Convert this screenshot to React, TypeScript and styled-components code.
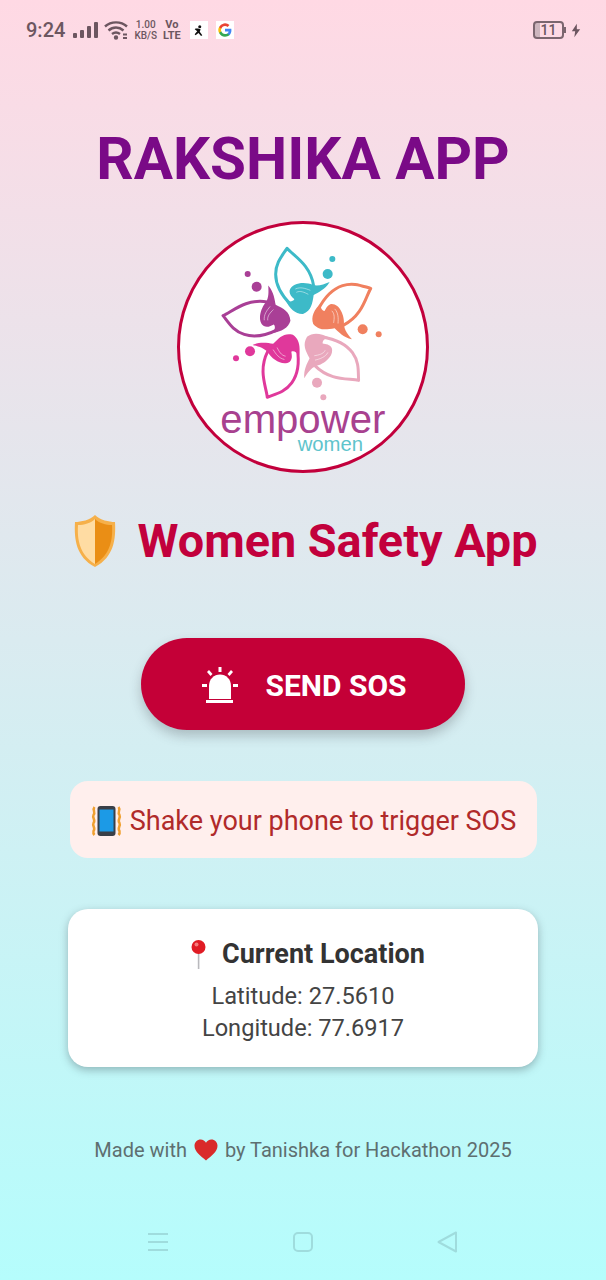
import styled, { createGlobalStyle } from 'styled-components';

const GlobalStyle = createGlobalStyle`
  html, body {
    margin: 0;
    padding: 0;
  }
  body {
    font-family: Roboto, "Liberation Sans", sans-serif;
  }
`;

const Page = styled.div`
  width: 606px;
  height: 1280px;
  overflow: hidden;
  display: flex;
  flex-direction: column;
  align-items: center;
  background: linear-gradient(180deg, #ffd9e4 0%, #b5fdfc 100%);
`;

const StatusBar = styled.div`
  width: 100%;
  height: 60px;
  box-sizing: border-box;
  padding: 0 25px 0 26px;
  display: flex;
  align-items: center;
  gap: 6px;
  color: #6c5660;
`;

const Clock = styled.span`
  font-size: 20px;
  font-weight: 500;
  margin-right: 2px;
`;

const SpeedBlock = styled.div`
  display: flex;
  flex-direction: column;
  align-items: center;
  font-size: 10px;
  font-weight: 500;
  line-height: 11px;
`;

const NetBlock = styled(SpeedBlock)`
  font-size: 11px;
  font-weight: 700;
`;

const NotifyTile = styled.div<{ $gap: number }>`
  width: 18px;
  height: 18px;
  margin-left: ${(p) => p.$gap}px;
  background: #fff;
  display: flex;
  align-items: center;
  justify-content: center;
`;

const StatusRight = styled.div`
  margin-left: auto;
  display: flex;
  align-items: center;
  gap: 7px;
`;

const Battery = styled.div`
  position: relative;
  width: 31px;
  height: 18px;
  box-sizing: border-box;
  border: 2px solid #7b666f;
  border-radius: 4px;
  display: flex;
  align-items: center;
  justify-content: center;
  font-size: 14px;
  font-weight: 500;
  color: #6c5660;
  background: linear-gradient(90deg, #cdb6be 0 5px, transparent 5px);

  &::after {
    content: '';
    position: absolute;
    right: -4px;
    top: 4px;
    width: 2px;
    height: 6px;
    background: #7b666f;
  }
`;

const Title = styled.h1`
  margin: 63px 0 0;
  font-size: 58.4px;
  line-height: 72px;
  font-weight: 700;
  color: #7a0a87;
  white-space: nowrap;
`;

const LogoBadge = styled.div`
  width: 252px;
  height: 252px;
  box-sizing: border-box;
  margin-top: 26px;
  border: 3px solid #c2003c;
  border-radius: 50%;
  background: #fff;
  overflow: hidden;
`;

const Heading = styled.h2`
  margin: 35px 0 0;
  height: 66px;
  display: flex;
  align-items: center;
  gap: 19px;
  font-size: 46.8px;
  font-weight: 700;
  color: #c2003c;
  white-space: nowrap;
`;

const SosButton = styled.button`
  width: 324px;
  height: 92px;
  margin-top: 64px;
  padding: 3px 0 0 3px;
  border: 0;
  border-radius: 46px;
  background: #c40037;
  color: #fff;
  display: flex;
  align-items: center;
  justify-content: center;
  gap: 27px;
  font-family: inherit;
  font-size: 30px;
  font-weight: 700;
  box-shadow: 0 6px 12px rgba(60, 60, 70, 0.28);
`;

const ShakeBanner = styled.div`
  width: 467px;
  height: 77px;
  margin-top: 51px;
  padding: 2px 0 0 1px;
  box-sizing: border-box;
  border-radius: 18px;
  background: #ffefed;
  color: #b02a2a;
  display: flex;
  align-items: center;
  justify-content: center;
  gap: 8px;
  font-size: 27px;
  white-space: nowrap;
`;

const LocationCard = styled.div`
  width: 470px;
  height: 158px;
  margin-top: 51px;
  box-sizing: border-box;
  padding-top: 29px;
  border-radius: 20px;
  background: #fff;
  box-shadow: 0 3px 8px rgba(50, 60, 70, 0.35);
  display: flex;
  flex-direction: column;
  align-items: center;
  color: #444;
  font-size: 23.6px;
  line-height: 32px;
`;

const CardTitle = styled.div`
  display: flex;
  align-items: center;
  gap: 11px;
  margin-bottom: 10px;
  font-size: 27px;
  font-weight: 700;
  color: #333;
`;

const Footer = styled.div`
  margin-top: 69px;
  display: flex;
  align-items: center;
  gap: 7px;
  font-size: 20px;
  line-height: 28px;
  color: #5e6f70;
`;

const NavBar = styled.div`
  width: 100%;
  margin-top: 67px;
  box-sizing: border-box;
  padding: 0 149px 0 148px;
  display: flex;
  align-items: center;
  justify-content: space-between;
`;

const PetalFigure = ({ color, angle }: { color: string; angle: number }) => (
  <g transform={`rotate(${angle} 393 335)`}>
    <path
      d="M362 272C340 250 316 215 316 180C316 145 335 125 350 102C370 125 420 150 430 215"
      fill="none"
      stroke={color}
      strokeWidth="9"
      strokeLinejoin="round"
    />
    <path
      d="M358 228C366 204 405 202 428 212C445 216 460 210 478 203C464 226 444 234 430 242C426 268 424 288 398 299C376 300 358 284 346 258C358 264 368 262 372 255C365 248 356 240 358 228Z"
      fill={color}
    />
    <path d="M375 224C390 217 405 222 420 228M378 234C390 228 402 234 414 240" fill="none" stroke="#fff" strokeWidth="2" opacity="0.7" />
  </g>
);

const logoDots = [
  [486, 134, 9, '#3dbac8'],
  [472, 179, 15, '#3dbac8'],
  [577, 345, 15, '#f0805f'],
  [625, 360, 9, '#f0805f'],
  [440, 505, 15, '#e9a8bd'],
  [459, 549, 9, '#e9a8bd'],
  [239, 411, 15, '#e0389b'],
  [197, 432, 9, '#e0389b'],
  [259, 217, 15, '#a93f96'],
  [232, 179, 9, '#a93f96'],
] as const;

const EmpowerLogo = () => (
  <svg width="246" height="246" viewBox="29 29 738 738">
    <PetalFigure color="#3dbac8" angle={0} />
    <PetalFigure color="#f0805f" angle={72} />
    <PetalFigure color="#e9a8bd" angle={144} />
    <PetalFigure color="#e0389b" angle={216} />
    <PetalFigure color="#a93f96" angle={288} />
    {logoDots.map(([cx, cy, r, fill]) => (
      <circle key={`${cx}-${cy}`} cx={cx} cy={cy} r={r} fill={fill} />
    ))}
    <text x="150" y="656" fontFamily="'Liberation Sans', sans-serif" fontSize="120" fill="#a8418f" textLength="495" lengthAdjust="spacingAndGlyphs">
      empower
    </text>
    <text x="382" y="710" fontFamily="'Liberation Sans', sans-serif" fontSize="58" fill="#5fc4cc" textLength="196" lengthAdjust="spacingAndGlyphs">
      women
    </text>
  </svg>
);

const ShieldIcon = () => (
  <svg width="50" height="52" viewBox="-6 0 50 52">
    <path d="M21 0C16 5 7 7 1 7C0 24 2 42 21 52C40 42 42 24 41 7C35 7 26 5 21 0Z" fill="#f6b04a" />
    <path d="M21 4C17 8 10 10 4 10C3 25 6 40 21 49Z" fill="#ffdca3" />
    <path d="M21 4C25 8 32 10 38 10C39 25 36 40 21 49Z" fill="#ea8e15" />
  </svg>
);

const SirenIcon = () => (
  <svg width="36" height="37" viewBox="0 0 36 37" fill="#fff">
    <path d="M7 32V19C7 12 12 7.500 18 7.500C24 7.500 29 12 29 19V32Z" />
    <rect x="4" y="33" width="27" height="3" />
    <rect x="16.500" y="0" width="3" height="5" />
    <rect x="0" y="17" width="5" height="3" />
    <rect x="31" y="17" width="5" height="3" />
    <path d="M5 5L7 3L10.500 7L8.500 9ZM31 5L29 3L25.500 7L27.500 9Z" />
  </svg>
);

const VibrateIcon = () => (
  <svg width="31" height="30" viewBox="0 0 31 30">
    <path d="M3.500 1C1 4 5 6 2.500 9C1 12 5 14 2.500 17C1 20 5 22 2.500 25C2 27 2.500 28 3.500 29M27.500 1C30 4 26 6 28.500 9C30 12 26 14 28.500 17C30 20 26 22 28.500 25C29 27 28.500 28 27.500 29" fill="none" stroke="#f0a030" strokeWidth="2.500" />
    <rect x="6.500" y="0" width="18" height="30" rx="3" fill="#3a3f47" />
    <rect x="8.500" y="3.500" width="14" height="22" fill="#1c9ae6" />
  </svg>
);

const PinIcon = () => (
  <svg width="30" height="30" viewBox="-10 0 30 30">
    <rect x="6.800" y="12" width="1.600" height="18" fill="#b9b9bd" />
    <circle cx="7.500" cy="8" r="7" fill="#e01b24" />
    <circle cx="5.500" cy="5.500" r="2" fill="#f47a7a" />
  </svg>
);

const HeartIcon = () => (
  <svg width="24" height="22" viewBox="0 0 24 22">
    <path d="M12 21.500C7 17 0.500 13 0.500 6.800C0.500 3 3.400 0.500 6.600 0.500C9 0.500 11 1.800 12 3.800C13 1.800 15 0.500 17.400 0.500C20.600 0.500 23.500 3 23.500 6.800C23.500 13 17 17 12 21.500Z" fill="#d92a2a" />
  </svg>
);

const App = () => (
  <Page>
    <GlobalStyle />
    <StatusBar>
      <Clock>9:24</Clock>
      <svg width="25" height="18" viewBox="0 0 25 18" fill="#6c5660">
        <rect x="0" y="12" width="4" height="5" rx="1" />
        <rect x="7" y="9" width="4" height="8" rx="1" />
        <rect x="14" y="5" width="4" height="12" rx="1" />
        <rect x="21" y="1" width="4" height="16" rx="1" />
      </svg>
      <svg width="24" height="20" viewBox="0 0 24 20" fill="none" stroke="#6c5660" strokeWidth="2.400">
        <path d="M1 6.500C7 1 17 1 23 6.500" />
        <path d="M4.500 10.500C9 6.500 15 6.500 19.500 10.500" />
        <path d="M8 14C10.500 12 13.500 12 16 14" />
        <circle cx="12" cy="17.500" r="1" fill="#6c5660" />
        <path d="M19 14.500H23M19 18H23" strokeWidth="2" />
      </svg>
      <SpeedBlock>
        <span>1.00</span>
        <span>KB/S</span>
      </SpeedBlock>
      <NetBlock>
        <span>Vo</span>
        <span>LTE</span>
      </NetBlock>
      <NotifyTile $gap={3}>
        <svg width="11" height="13" viewBox="0 0 13 15" fill="#111">
          <circle cx="8" cy="3" r="1.800" />
          <path d="M6 5L9 6L8 9L11 13L9.500 14L6.500 10.500L3 13L2 12L5 8.500L2 6L3 5Z" />
        </svg>
      </NotifyTile>
      <NotifyTile $gap={2}>
        <svg width="14" height="14" viewBox="0 0 24 24">
          <path d="M23 12.300c0-.8-.1-1.600-.2-2.300H12v4.400h6.200a5.300 5.300 0 0 1-2.300 3.500v2.900h3.700c2.200-2 3.400-5 3.400-8.500z" fill="#4285f4" />
          <path d="M12 23.500c3.100 0 5.700-1 7.600-2.800l-3.700-2.900c-1 .7-2.400 1.100-3.900 1.100-3 0-5.500-2-6.400-4.700H1.800v3a11.500 11.500 0 0 0 10.200 6.300z" fill="#34a853" />
          <path d="M5.600 14.200a6.900 6.900 0 0 1 0-4.400v-3H1.800a11.500 11.500 0 0 0 0 10.400z" fill="#fbbc05" />
          <path d="M12 5.100c1.700 0 3.200.6 4.400 1.700l3.300-3.300A11.500 11.500 0 0 0 1.800 6.800l3.800 3c.9-2.700 3.400-4.700 6.400-4.700z" fill="#ea4335" />
        </svg>
      </NotifyTile>
      <StatusRight>
        <Battery>11</Battery>
        <svg width="10" height="15" viewBox="0 0 12 16" fill="#6c5660">
          <path d="M7 0L1 9H5L4 16L11 6.500H7Z" />
        </svg>
      </StatusRight>
    </StatusBar>
    <Title>RAKSHIKA APP</Title>
    <LogoBadge>
      <EmpowerLogo />
    </LogoBadge>
    <Heading>
      <ShieldIcon />
      Women Safety App
    </Heading>
    <SosButton>
      <SirenIcon />
      SEND SOS
    </SosButton>
    <ShakeBanner>
      <VibrateIcon />
      Shake your phone to trigger SOS
    </ShakeBanner>
    <LocationCard>
      <CardTitle>
        <PinIcon />
        Current Location
      </CardTitle>
      <span>Latitude: 27.5610</span>
      <span>Longitude: 77.6917</span>
    </LocationCard>
    <Footer>
      Made with
      <HeartIcon />
      by Tanishka for Hackathon 2025
    </Footer>
    <NavBar>
      <svg width="20" height="20" viewBox="0 0 20 20" stroke="#9fdcdd" strokeWidth="2">
        <path d="M0 2H20M0 10H20M0 18H20" />
      </svg>
      <svg width="20" height="20" viewBox="0 0 20 20" fill="none" stroke="#9fdcdd" strokeWidth="2">
        <rect x="1" y="1" width="18" height="18" rx="4" />
      </svg>
      <svg width="20" height="22" viewBox="0 0 20 22" fill="none" stroke="#9fdcdd" strokeWidth="2" strokeLinejoin="round">
        <path d="M19 1.500V20.500L1.500 11Z" />
      </svg>
    </NavBar>
  </Page>
);

export default App;
